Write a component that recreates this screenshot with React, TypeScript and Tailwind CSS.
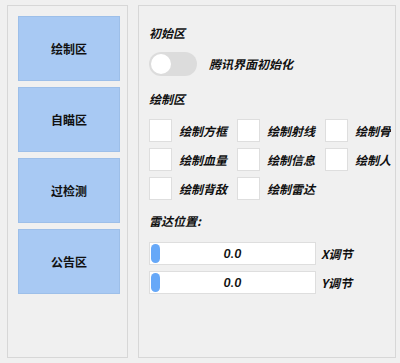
const navItems = ['绘制区', '自瞄区', '过检测', '公告区'];

const drawOptions = [
  ['绘制方框', '绘制射线', '绘制骨骼'],
  ['绘制血量', '绘制信息', '绘制人物'],
  ['绘制背敌', '绘制雷达'],
];

const sliders = [
  { value: '0.0', label: 'X调节' },
  { value: '0.0', label: 'Y调节' },
];

const font = { fontFamily: '"Noto Sans CJK SC", "Noto Sans", sans-serif' };

export default function App() {
  return (
    <div
      className="w-[400px] h-[363px] bg-[#f0f0f0] flex pt-[5px] pl-[7px] gap-[10px] text-[#111] text-[12px] font-bold overflow-hidden"
      style={font}
    >
      {/* Nav */}
      <div className="w-[121px] h-[353px] border border-[#d7d7d7] pt-[10px] pl-[10px] flex flex-col gap-[6px]">
        {navItems.map((item) => (
          <button
            key={item}
            className="w-[102px] h-[65px] bg-[#a8c9f3] border border-[#9dbfe9] flex items-center justify-center font-bold text-[12px]"
          >
            {item}
          </button>
        ))}
      </div>

      {/* Content */}
      <div className="w-[258px] h-[353px] border border-[#d7d7d7] pl-[10px] pt-[19px] overflow-hidden">
        <div className="h-[16px] leading-[16px] italic">初始区</div>

        <div className="mt-[11px] flex items-center gap-[12px] h-[24px]">
          <div className="w-[48px] h-[24px] rounded-full bg-[#dcdcdc] flex items-center pl-[2px]">
            <div className="w-[20px] h-[20px] rounded-full bg-white" />
          </div>
          <span className="italic">腾讯界面初始化</span>
        </div>

        <div className="mt-[15px] h-[16px] leading-[16px] italic">绘制区</div>

        <div className="mt-[12px] flex flex-col gap-[6px]">
          {drawOptions.map((row, i) => (
            <div key={i} className="flex h-[23px]">
              {row.map((opt, j) => (
                <div
                  key={opt}
                  className={`flex items-center gap-[7px] overflow-hidden whitespace-nowrap ${
                    j === 2 ? 'w-[66px]' : 'w-[88px]'
                  }`}
                >
                  <div className="w-[23px] h-[23px] shrink-0 bg-white border border-[#dedede]" />
                  <span className="italic">{opt}</span>
                </div>
              ))}
            </div>
          ))}
        </div>

        <div className="mt-[13px] h-[16px] leading-[16px] italic">雷达位置:</div>

        <div className="mt-[13px] flex flex-col gap-[6px]">
          {sliders.map((s) => (
            <div key={s.label} className="flex items-center gap-[5px] h-[23px]">
              <div className="relative w-[167px] h-[23px] bg-white border border-[#dedede] flex items-center justify-center">
                <div className="absolute left-[1px] top-[1px] w-[9px] h-[19px] rounded-full bg-[#66a8f8]" />
                <span
                  className="italic font-semibold text-[13px]"
                  style={{ fontFamily: 'Roboto, "Noto Sans", sans-serif' }}
                >
                  {s.value}
                </span>
              </div>
              <span className="italic">{s.label}</span>
            </div>
          ))}
        </div>
      </div>
    </div>
  );
}
